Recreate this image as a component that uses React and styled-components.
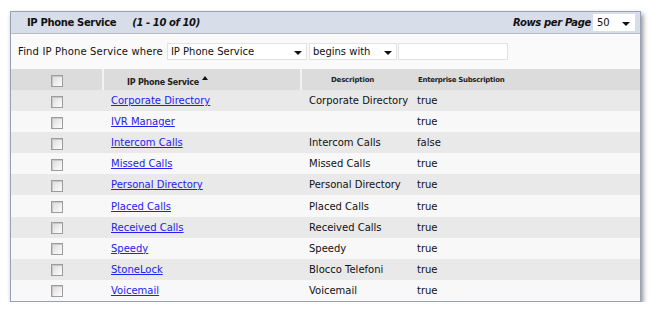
import React from "react";
import styled, { createGlobalStyle } from "styled-components";

const GlobalStyle = createGlobalStyle`
  html, body { margin: 0; padding: 0; background: #ffffff; }
  body { font-family: "DejaVu Sans", Verdana, sans-serif; }
`;

const Page = styled.div`
  padding: 11px 0 0 10px;
`;

const Panel = styled.div`
  width: 629px;
  border: 1px solid #98a1b3;
  background: #fafafa;
  box-shadow: 2px 3px 5px rgba(0, 0, 0, 0.45);
`;

const TitleBar = styled.div`
  height: 21px;
  display: flex;
  align-items: center;
  padding: 0 5px 0 16px;
  background: #d7dde9;
  border-bottom: 1px solid #b3bac8;
  font-size: 10px;
  color: #111;
`;

const Title = styled.span`
  font-weight: bold;
  letter-spacing: -0.35px;
  font-style: ${(p) => (p.$italic ? "italic" : "normal")};
`;

const Range = styled.span`
  font-weight: bold;
  font-style: italic;
  letter-spacing: -0.4px;
  margin-left: 16px;
`;

const Spacer = styled.div`
  flex: 1;
`;

const DropBox = styled.div`
  position: relative;
  box-sizing: border-box;
  width: ${(p) => p.$w}px;
  height: 17px;
  background: #fff;
  border: 1px solid ${(p) => (p.$plain ? "#fff" : "#e2e2e2")};
  font-size: 10px;
  color: #111;
  display: flex;
  align-items: center;
  padding-left: 3px;
  margin-left: ${(p) => p.$ml || 0}px;
`;

const Arrow = styled.span`
  position: absolute;
  right: 4px;
  top: 7px;
  width: 0;
  height: 0;
  border-left: 4px solid transparent;
  border-right: 4px solid transparent;
  border-top: 4px solid #111;
`;

const FilterBar = styled.div`
  height: 35px;
  display: flex;
  align-items: center;
  padding-left: 7px;
  font-size: 10px;
  color: #111;
  background: #fafafa;
`;

const Label = styled.span`
  letter-spacing: 0.15px;
  margin-right: 4px;
`;

const TextInput = styled.div`
  box-sizing: border-box;
  width: 110px;
  height: 17px;
  background: #fff;
  border: 1px solid #e2e2e2;
  margin-left: 1px;
`;

const Table = styled.table`
  width: 100%;
  border-collapse: collapse;
  font-size: 10px;
  color: #111;
`;

const HeadRow = styled.tr`
  height: 21px;
  background: #dcdcdc;
`;

const Th = styled.th`
  padding: 0 0 0 ${(p) => p.$pl || 0}px;
  width: ${(p) => (p.$w ? p.$w + "px" : "auto")};
  border-left: ${(p) => (p.$div ? "2px solid #f2f2f2" : "none")};
  font-size: ${(p) => p.$fs || 8}px;
  letter-spacing: ${(p) => p.$ls || 0}px;
  font-weight: bold;
  text-align: ${(p) => p.$align || "left"};
  vertical-align: ${(p) => p.$va || "middle"};
  padding-bottom: ${(p) => p.$pb || 0}px;
  color: #222;
  box-sizing: border-box;
`;

const SortArrow = styled.span`
  display: inline-block;
  margin-left: 3px;
  vertical-align: 5px;
  width: 0;
  height: 0;
  border-left: 3px solid transparent;
  border-right: 3px solid transparent;
  border-bottom: 4px solid #111;
`;

const Row = styled.tr`
  height: 21.1px;
  background: ${(p) => (p.$odd ? "#e9e9e9" : "#f8f8f8")};
`;

const Td = styled.td`
  padding: 0 0 0 ${(p) => p.$pl || 0}px;
  text-align: ${(p) => p.$align || "left"};
  white-space: nowrap;
`;

const Check = styled.span`
  display: inline-block;
  vertical-align: middle;
  box-sizing: border-box;
  width: 12px;
  height: 12px;
  border: 1px solid #9c9c9c;
  background: linear-gradient(135deg, #d9d9d9 0%, #f3f3f3 70%, #fbfbfb 100%);
  box-shadow: inset 1px 1px 0 #c8c8c8;
  margin-top: 2px;
`;

const Link = styled.a`
  color: #2222ee;
  text-decoration: underline;
  cursor: pointer;
`;

const rows = [
  ["Corporate Directory", "Corporate Directory", "true"],
  ["IVR Manager", "", "true"],
  ["Intercom Calls", "Intercom Calls", "false"],
  ["Missed Calls", "Missed Calls", "true"],
  ["Personal Directory", "Personal Directory", "true"],
  ["Placed Calls", "Placed Calls", "true"],
  ["Received Calls", "Received Calls", "true"],
  ["Speedy", "Speedy", "true"],
  ["StoneLock", "Blocco Telefoni", "true"],
  ["Voicemail", "Voicemail", "true"],
];

export default function App() {
  return (
    <>
      <GlobalStyle />
      <Page>
        <Panel>
          <TitleBar>
            <Title>IP Phone Service</Title>
            <Range>(1 - 10 of 10)</Range>
            <Spacer />
            <Title $italic>Rows per Page</Title>
            <DropBox $w={42} $plain $ml={2}>
              50
              <Arrow />
            </DropBox>
          </TitleBar>
          <FilterBar>
            <Label>Find IP Phone Service where</Label>
            <DropBox $w={140}>
              IP Phone Service
              <Arrow />
            </DropBox>
            <DropBox $w={88} $ml={2}>
              begins with
              <Arrow />
            </DropBox>
            <TextInput />
          </FilterBar>
          <Table>
            <thead>
              <HeadRow>
                <Th $w={92} $align="center" $va="middle">
                  <Check />
                </Th>
                <Th $w={198} $div $pl={23} $va="bottom" $pb={3} $ls={-0.25}>
                  IP Phone Service
                  <SortArrow />
                </Th>
                <Th $w={108} $div $pl={29} $fs={7} $ls={-0.2}>
                  Description
                </Th>
                <Th $pl={9} $fs={7} $ls={-0.3}>
                  Enterprise Subscription
                </Th>
              </HeadRow>
            </thead>
            <tbody>
              {rows.map((r, i) => (
                <Row key={r[0]} $odd={i % 2 === 0}>
                  <Td $align="center">
                    <Check />
                  </Td>
                  <Td $pl={8}>
                    <Link>{r[0]}</Link>
                  </Td>
                  <Td $pl={8}>{r[1]}</Td>
                  <Td $pl={8}>{r[2]}</Td>
                </Row>
              ))}
            </tbody>
          </Table>
        </Panel>
      </Page>
    </>
  );
}
